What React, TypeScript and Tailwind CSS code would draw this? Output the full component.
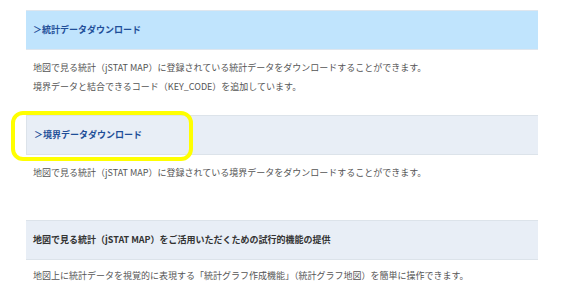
export default function App() {
  const font = { fontFamily: '"Noto Sans CJK JP", "Noto Sans", sans-serif' };
  return (
    <div className="relative w-[565px] h-[293px] overflow-hidden bg-white pt-[10px] pl-[26px]" style={font}>
      <div className="w-[512px]">
        <div className="h-[40px] flex items-center px-[7px] bg-[#c0e4fd] border-t border-b border-[#dfe6ee] text-[9px] font-bold text-[#1f4e98]">
          ＞統計データダウンロード
        </div>
        <div className="pt-[8px] px-[7px] text-[9px] leading-[19px] text-[#555]">
          <p>地図で見る統計（jSTAT MAP）に登録されている統計データをダウンロードすることができます。</p>
          <p>境界データと結合できるコード（KEY_CODE）を追加しています。</p>
        </div>
        <div className="mt-[19px] h-[40px] flex items-center px-[7px] bg-[#e8eef6] border-t border-b border-l border-[#dce3ea] text-[9px] font-bold text-[#1f4e98]">
          ＞境界データダウンロード
        </div>
        <div className="pt-[8px] px-[7px] text-[9px] leading-[19px] text-[#555]">
          <p>地図で見る統計（jSTAT MAP）に登録されている境界データをダウンロードすることができます。</p>
        </div>
        <div className="mt-[38px] h-[40px] flex items-center px-[7px] bg-[#e8eef6] border-t border-b border-[#dce3ea] text-[9px] font-bold text-[#333]">
          地図で見る統計（jSTAT MAP）をご活用いただくための試行的機能の提供
        </div>
        <div className="pt-[6px] px-[7px] text-[9px] leading-[19px] text-[#555]">
          <p>地図上に統計データを視覚的に表現する「統計グラフ作成機能」（統計グラフ地図）を簡単に操作できます。</p>
        </div>
      </div>
      <div className="absolute left-[11px] top-[111px] w-[182px] h-[50px] border-4 border-[#ffff00] rounded-[12px]" />
    </div>
  );
}
